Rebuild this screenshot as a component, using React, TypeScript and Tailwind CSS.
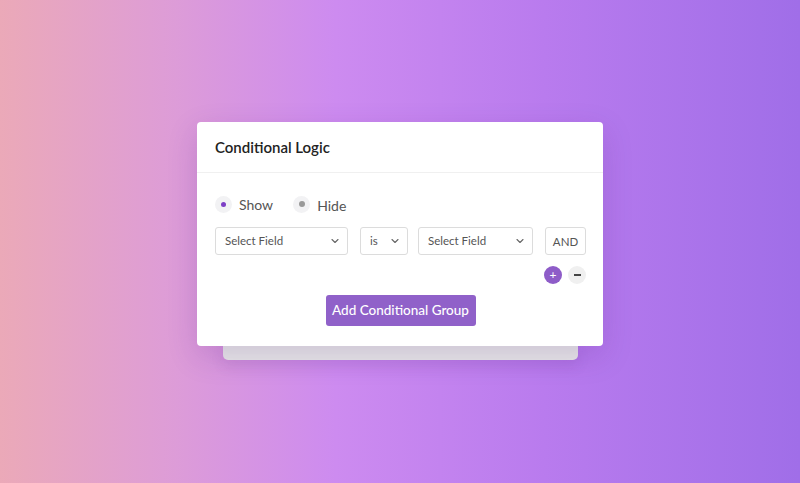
import React from "react";

function Chevron() {
  return (
    <svg width="10" height="10" viewBox="0 0 10 10" fill="none" className="shrink-0">
      <path d="M2 3.5 L5 6.5 L8 3.5" stroke="#666" strokeWidth="1.1" strokeLinecap="round" strokeLinejoin="round" />
    </svg>
  );
}

function Select({ label, w }: { label: string; w: string }) {
  return (
    <div className={`${w} h-[28px] flex items-center justify-between border border-[#dcdcdc] rounded-[3px] bg-white pl-[9px] pr-[7px] text-[11.5px] text-[#555]`}>
      <span>{label}</span>
      <Chevron />
    </div>
  );
}

export default function App() {
  return (
    <div
      className="w-full h-[483px] flex items-center justify-center bg-[linear-gradient(90deg,#eba9b8_0%,#dd9cd8_22%,#cd8bf0_42%,#b97bee_68%,#a06ee8_100%)]"
      style={{ fontFamily: "Lato, 'Noto Sans', sans-serif" }}
    >
      <div className="flex flex-col items-center pb-[1px]">
        <div className="w-[406px] bg-white rounded-[4px] shadow-[0_10px_30px_rgba(80,30,120,0.18)] relative z-10">
          <div className="h-[51px] px-[18px] flex items-center border-b border-[#f0f0f0]">
            <h1 className="text-[15px] font-semibold text-[#222]">Conditional Logic</h1>
          </div>
          <div className="pl-[18px] pr-[17px] pt-[20px] pb-[20px]">
            <div className="flex items-center h-[22px]">
              <div className="flex items-center">
                <span className="w-[17px] h-[17px] rounded-full bg-[#f2f2f4] flex items-center justify-center">
                  <span className="w-[5px] h-[5px] rounded-full bg-[#7d3fc6]" />
                </span>
                <span className="ml-[7px] text-[14px] text-[#555]">Show</span>
              </div>
              <div className="flex items-center ml-[20px]">
                <span className="w-[17px] h-[17px] rounded-full bg-[#f2f2f4] flex items-center justify-center">
                  <span className="w-[6px] h-[6px] rounded-full bg-[#999]" />
                </span>
                <span className="ml-[7px] text-[14px] text-[#555] mt-[2px]">Hide</span>
              </div>
            </div>
            <div className="flex items-center mt-[12px]">
              <Select label="Select Field" w="w-[133px]" />
              <div className="ml-[12px]">
                <Select label="is" w="w-[48px]" />
              </div>
              <div className="ml-[10px]">
                <Select label="Select Field" w="w-[115px]" />
              </div>
              <div className="ml-[12px] w-[41px] h-[28px] border border-[#dcdcdc] rounded-[3px] flex items-center justify-center text-[11.5px] text-[#555] pt-[1px]">
                AND
              </div>
            </div>
            <div className="flex justify-end items-center gap-[6px] mt-[11px]">
              <span className="w-[18px] h-[18px] rounded-full bg-[#8e5cc8] flex items-center justify-center text-white text-[12px] leading-none">+</span>
              <span className="w-[18px] h-[18px] rounded-full bg-[#f0f0f0] flex items-center justify-center">
                <span className="w-[7px] h-[1.2px] bg-[#444]" />
              </span>
            </div>
            <div className="flex justify-center mt-[11px]">
              <button className="w-[150px] h-[31px] rounded-[3px] bg-[#9061c9] text-white text-[13.5px] font-medium">
                Add Conditional Group
              </button>
            </div>
          </div>
        </div>
        <div className="w-[355px] h-[14px] bg-[#e8e8e8] rounded-b-[5px] shadow-[0_6px_14px_rgba(80,30,120,0.10)]" />
      </div>
    </div>
  );
}
